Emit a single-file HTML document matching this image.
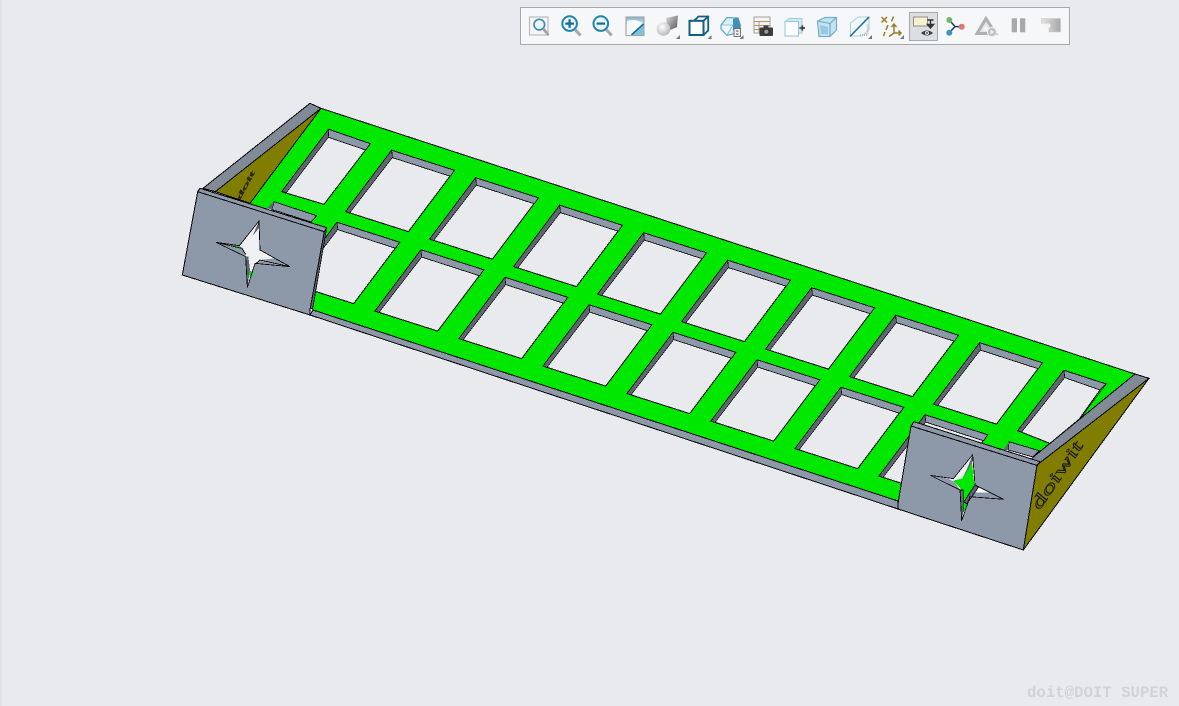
<!DOCTYPE html>
<html>
<head>
<meta charset="utf-8">
<style>
html,body{margin:0;padding:0;width:1179px;height:706px;overflow:hidden;background:#e8eaee}
svg{position:absolute;left:0;top:0}
#strip{position:absolute;left:0;top:0;width:2px;height:706px;background:#dfe3e3}
#bar{position:absolute;left:520px;top:7px;width:548px;height:36px;border:1px solid #a8a8a8;background:#f6f7f9}
#sel{position:absolute;left:909px;top:12px;width:27px;height:27px;border:1px solid #a8a8a8;background:#dcdfe2}
#wm{position:absolute;left:1027px;top:684px;font:bold 15.7px "Liberation Mono",monospace;color:#d2d3d5;white-space:pre;line-height:18px}
</style>
</head>
<body>
<div id="strip"></div>
<svg width="1179" height="706" viewBox="0 0 1179 706" shape-rendering="crispEdges">
<defs>
<g id="w">
<polygon points="0,0 62.7,20 16.7,81.3 -46,61.3" fill="#e8eaee" stroke="#000" stroke-width="1"/>
<polygon points="0,0 62.7,20 58.7,26 .7,7.3" fill="#8d99a8" stroke="#000" stroke-width=".8"/>
<polygon points="0,0 .7,7.3 -42,62.6 -46,61.3" fill="#5e6672" stroke="#000" stroke-width=".6"/>
</g>
</defs>

<polygon points="203,188.3 310,103.3 321,108.3 215.3,191.7" fill="#808b97" stroke="#000" stroke-width="1"/>
<polygon points="321,108.3 215.3,191.7 250,203.3" fill="#807d00" stroke="#000" stroke-width="1"/>
<polygon points="1135,374 1149,378.3 1037,465 1031.7,458.3" fill="#808b97" stroke="#000" stroke-width="1"/>

<polygon points="313,310 898,501 898,509 310,315" fill="#8d99a8" stroke="#000" stroke-width="1"/>
<polygon points="321,108.3 1135,374 1032,458 1000,535 898,501 313,310 250,203.3" fill="#00e800" stroke="#000" stroke-width="1"/>

<polygon points="328.7,129.3 370.3,143.7 324,204.3 281.7,191.7" fill="#e8eaee" stroke="#000"/>
<polygon points="328.7,129.3 370.3,143.7 365.7,150 328.3,137.3" fill="#8d99a8" stroke="#000" stroke-width=".8"/>
<polygon points="328.7,129.3 328.3,137.3 286.7,192.3 281.7,191.7" fill="#5e6672" stroke="#000" stroke-width=".6"/>

<use href="#w" x="391.7" y="150.3"/>
<use href="#w" x="475.7" y="177.8"/>
<use href="#w" x="559.7" y="205.3"/>
<use href="#w" x="643.7" y="232.8"/>
<use href="#w" x="727.7" y="260.3"/>
<use href="#w" x="811.7" y="287.8"/>
<use href="#w" x="895.7" y="315.3"/>
<use href="#w" x="979.7" y="342.8"/>

<use href="#w" x="337" y="222.3"/>
<use href="#w" x="421" y="249.8"/>
<use href="#w" x="505" y="277.3"/>
<use href="#w" x="589" y="304.8"/>
<use href="#w" x="673" y="332.3"/>
<use href="#w" x="757" y="359.8"/>
<use href="#w" x="841" y="387.3"/>
<use href="#w" x="925" y="414.8"/>

<polygon points="1064,370.3 1106,384 1080,418.5 1050,443.4 1017.7,430.7" fill="#e8eaee" stroke="#000"/>
<polygon points="1064,370.3 1106,384 1100,390 1064.7,377.6" fill="#8d99a8" stroke="#000" stroke-width=".8"/>
<polygon points="1064,370.3 1064.7,377.6 1021.7,432 1017.7,430.7" fill="#5e6672" stroke="#000" stroke-width=".6"/>
<polygon points="1100,390 1106,384 1080,418.5" fill="#00e800"/>
<line x1="1100" y1="390" x2="1080" y2="418" stroke="#000"/>

<polygon points="274,201.7 316.7,215.7 311,222 300,240 262,215" fill="#e8eaee"/>
<polygon points="274,201.7 316.7,215.7 311,222 272,209.5" fill="#8d99a8" stroke="#000" stroke-width=".8"/>
<polygon points="274,201.7 272,209.5 267,208" fill="#5e6672"/>

<polygon points="1009,441.7 1039.3,450.7 1031.7,458.3 1020,470 1005,450" fill="#e8eaee"/>
<polygon points="1009,441.7 1039.3,450.7 1033,457 1008.3,450" fill="#8d99a8" stroke="#000" stroke-width=".8"/>
<polygon points="1009,441.7 1008.3,450 1003.5,450" fill="#5e6672"/>

<polygon points="326.3,230 322.3,232.3 310,309 312.7,308.3" fill="#5e6672" stroke="#000" stroke-width=".8"/>
<polygon points="200,188.3 326.7,227.7 324.3,231.7 310,309.5 310,315 182.3,275 197.7,191.7" fill="#8d99a8" stroke="#000"/>
<line x1="197.7" y1="191.7" x2="324.3" y2="231.7" stroke="#000"/>

<polygon points="1149,378.3 1037,465 1023.3,550" fill="#807d00" stroke="#000"/>
<polygon points="914,421.7 1040,461.7 1037,465 1023.3,550 898,509 898.3,501.7 911,426" fill="#8d99a8" stroke="#000"/>
<line x1="911" y1="426" x2="1038" y2="465.7" stroke="#000"/>

<g transform="translate(210,215) scale(.33333)">
<polygon points="147,18 150,105 240,155 135,145 112,218 107,125 18,82 88,92" fill="#eef0f3"/>
<polygon points="18,82 88,92 100,100 107,125" fill="#8d99a8"/>
<polygon points="107,125 115,125 120,165 112,218" fill="#5e6672"/>
<polygon points="147,18 148,38 128,62" fill="#5e6672"/>
<polygon points="240,155 195,130 150,135 135,145" fill="#8d99a8"/>
<polygon points="118,168 130,170 125,187 118,185" fill="#00e800"/>
<polygon points="70,90 85,93 90,97 78,96" fill="#00e800"/>
<path d="M30 85 L95 100 L107 118 M240 155 L150 135 L135 148" fill="none" stroke="#000" stroke-width="2.4"/>
<polygon points="147,18 150,105 240,155 135,145 112,218 107,125 18,82 88,92" fill="none" stroke="#000" stroke-width="2.4"/>
</g>

<g transform="translate(925,450) scale(.33333)">
<polygon points="143,14 150,105 236,148 135,140 110,212 105,120 16,76 85,86" fill="#eef0f3"/>
<polygon points="16,76 65,85 88,95 105,120" fill="#8d99a8"/>
<polygon points="236,148 195,128 150,127 135,140" fill="#8d99a8"/>
<polygon points="140,30 148,105 118,155 128,160 115,190 115,125 85,92 112,85" fill="#00e800"/>
<polygon points="155,110 195,128 150,127" fill="#fff"/>
<polygon points="150,105 160,112 125,162 117,155" fill="#5e6672"/>
<polygon points="105,120 115,120 115,185 110,212" fill="#5e6672"/>
<polygon points="143,14 145,30 115,85" fill="#5e6672"/>
<path d="M150 105 L160 112 L125 162 L117 155 Z M105 120 L115 120 L115 185" fill="none" stroke="#000" stroke-width="2.4"/>
<polygon points="143,14 150,105 236,148 135,140 110,212 105,120 16,76 85,86" fill="none" stroke="#000" stroke-width="2.4"/>
</g>

<text transform="matrix(1.26,-1.86,1.15,.45,1040,510)" font-family="Liberation Serif,serif" font-style="italic" font-size="14" fill="none" stroke="#16161c" stroke-width="1" vector-effect="non-scaling-stroke" shape-rendering="auto">doiwit</text>
<text transform="matrix(.69,-1.28,.45,.1,240,200)" font-family="Liberation Serif,serif" font-style="italic" font-size="14" fill="none" stroke="#16161c" stroke-width="1" vector-effect="non-scaling-stroke" shape-rendering="auto">doit</text>
</svg>

<div id="bar"></div>
<div id="sel"></div>

<svg width="1179" height="706" viewBox="0 0 1179 706">
<defs>
<linearGradient id="g4" x1="0" y1="0" x2="0" y2="1"><stop offset="0" stop-color="#7fb2c9"/><stop offset=".5" stop-color="#e8f3f7"/><stop offset="1" stop-color="#f5fafc"/></linearGradient>
<radialGradient id="s1" cx=".4" cy=".35" r=".7"><stop offset="0" stop-color="#fff"/><stop offset="1" stop-color="#b4b4b4"/></radialGradient>
<linearGradient id="s2" x1="0" y1="0" x2="1" y2="1"><stop offset="0" stop-color="#dcdcdc"/><stop offset="1" stop-color="#505050"/></linearGradient>
<linearGradient id="g17" x1="0" y1="0" x2="1" y2="0"><stop offset="0" stop-color="#e2e2e2"/><stop offset="1" stop-color="#a8a8a8"/></linearGradient>
</defs>

<rect x="529.5" y="17" width="18.5" height="18" fill="#f6f6f6" stroke="#bdbdbd" stroke-width="1.2"/>
<circle cx="539.3" cy="24.6" r="5.3" fill="#eef6fa" stroke="#3f8eb4" stroke-width="1.7"/>
<path d="M543.5 29 L548.5 35.3" stroke="#a5a5a5" stroke-width="2.8"/>

<circle cx="569.6" cy="23.6" r="7.3" fill="#eaf4f8" stroke="#2383ab" stroke-width="2"/>
<path d="M565.3 23.6h8.6M569.6 19.3v8.6" stroke="#0f6c93" stroke-width="2.2"/>
<path d="M575 29.5 L580.5 35.5" stroke="#a8a8a8" stroke-width="3"/>

<circle cx="600.8" cy="23.6" r="7.3" fill="#eaf4f8" stroke="#2383ab" stroke-width="2"/>
<path d="M596.6 23.6h8.4" stroke="#0f6c93" stroke-width="2.2"/>
<path d="M606.2 29.5 L611.7 35.5" stroke="#a8a8a8" stroke-width="3"/>

<rect x="626" y="17" width="18" height="18.5" fill="url(#g4)" stroke="#a8a8a8" stroke-width="1.2"/>
<path d="M627 21 Q636 18 643.5 24 L643.5 35 L627 35Z" fill="#f4fafc"/>
<path d="M632 35 L643.5 24.5 L643.5 35Z" fill="#7fc1dc"/>
<path d="M631.5 34.8 L643.5 24" stroke="#146a8e" stroke-width="1.6"/>

<path d="M666 18 L678 15.5 L677 27 L668 31Z" fill="url(#s2)"/>
<circle cx="663.5" cy="29" r="6.8" fill="url(#s1)"/>
<path d="M680 35v4h-4z" fill="#777"/>

<path d="M694 20.8 L698.5 16.5 H708.2 V30.5 L703.5 35" fill="#f7f9fa" stroke="#0f5f80" stroke-width="1.8"/>
<path d="M703.5 20.8 L708.2 16.5" stroke="#0f5f80" stroke-width="1.8"/>
<rect x="689.5" y="20.8" width="14" height="14.2" fill="#fff" stroke="#0f5f80" stroke-width="2"/>
<path d="M711.5 35v4h-4z" fill="#777"/>

<path d="M721 25 L727 17.5 L738 18 L740.3 25 L740.3 32 L727 35.5 L721 29Z" fill="#d9eef7" stroke="#5fa7c8" stroke-width="1.2"/>
<path d="M733 19 L738 18 L740.3 25 L740.3 30 L733 30Z" fill="#3f8fb7"/>
<path d="M721.5 25 L733 25 L727 35" fill="#eef8fc" stroke="#77b7d3" stroke-width=".8"/>
<rect x="734" y="28.5" width="6.5" height="8" fill="#efefef" stroke="#666" stroke-width=".9"/>
<path d="M736 31h2.5M736 34h2.5" stroke="#555"/>
<path d="M743.5 35v4h-4z" fill="#777"/>

<rect x="754" y="17" width="16" height="16" fill="#f3f3f3" stroke="#a8a8a8" stroke-width="1.1"/>
<path d="M754 21.5h16M754 25.5h16M754 29.5h16M759 21.5v12" stroke="#b5916f" stroke-width=".9"/>
<rect x="759.5" y="27.5" width="13.5" height="8.5" rx="1" fill="#3d3d3d"/>
<rect x="763.5" y="25.5" width="5" height="3" fill="#3d3d3d"/>
<circle cx="766.3" cy="31.7" r="2.6" fill="#999" stroke="#222" stroke-width=".8"/>

<path d="M785 22 L789 18.5 H802 V33 L785 36Z" fill="#cfe9f5" stroke="#9cccdf" stroke-width="1"/>
<rect x="785" y="21.5" width="13.5" height="14.5" fill="#fff" stroke="#8cc5de" stroke-width="1"/>
<path d="M799.5 28h5.5M802.3 25.3v5.5" stroke="#444" stroke-width="1.8"/>

<path d="M817.5 21 L825 17.5 H836.5 V30 L830 36.5 H819Z" fill="#c5e3ef" stroke="#6fb0cc" stroke-width="1.2"/>
<path d="M817.5 21 L830 23.5 L836.5 17.5 M830 23.5 V36.5" fill="none" stroke="#6fb0cc" stroke-width="1.2"/>
<path d="M820 25 L828 27 L828 34 L821 34Z" fill="#92c9df"/>

<path d="M850.5 23 L858 17 H869 V30 L862 36 H850.5Z" fill="#f2f8fb" stroke="#a7cfe1" stroke-width="1"/>
<path d="M860 35 H867.5 V24" fill="none" stroke="#bdbdbd" stroke-width="2" stroke-dasharray="1 1"/>
<path d="M850 36.5 L869 17" stroke="#1e6f96" stroke-width="1.6"/>
<path d="M872 35v4h-4z" fill="#777"/>

<g stroke="#9a7b2a" stroke-width="1.5" fill="none">
<path d="M881.5 17 L887 22.5 M887 17 L881.5 22.5"/>
<path d="M893.5 16.5 L891.5 21.5"/>
<path d="M888 25 L886 30"/>
<path d="M885 32 L883.5 36"/>
<path d="M894 24 V33 M891.5 27 L894 24 L896.5 27 M894 33 L901 33 M898.5 30.5 L901 33 L898.5 35.5 M894 33 L889 36.5"/>
</g>
<path d="M904 35v4h-4z" fill="#777"/>

<rect x="913.5" y="17" width="14" height="9" fill="#f8efcd" stroke="#8f8f8f" stroke-width="1"/>
<path d="M927.5 20 H933.5 M930.5 20 V26 M927.5 24.5 L930.5 28 L933.5 24.5Z" fill="#333" stroke="#333" stroke-width="1.4"/>
<path d="M921 33 Q927 28 933 33 Q927 38 921 33Z" fill="#3d3d3d"/>
<circle cx="927" cy="33" r="2" fill="#dcdfe2"/>
<circle cx="927" cy="33" r=".9" fill="#333"/>

<path d="M949.3 20 L955 26.5 L961.7 26.7 M955 26.5 L949.3 32.7" fill="none" stroke="#173f5c" stroke-width="1.5"/>
<circle cx="949.3" cy="20" r="3" fill="#76b56c"/>
<circle cx="961.7" cy="26.7" r="3" fill="#dd7577"/>
<circle cx="949.3" cy="32.7" r="3" fill="#3f93c4"/>

<path d="M986 18.5 L995.5 33.5 H977 Z" fill="#e4e4e4" stroke="#b0b0b0" stroke-width="3"/>
<path d="M986 25 L989.5 31 H982.5Z" fill="#f5f5f5"/>
<circle cx="992" cy="32" r="4.6" fill="#c0c0c0" stroke="#efefef" stroke-width="1"/>
<path d="M990.5 29.8 L994.3 32 L990.5 34.2Z" fill="#f5f5f5"/>

<rect x="1011.7" y="18.3" width="5.3" height="14" fill="#a9a9a9"/>
<rect x="1020" y="18.3" width="5.3" height="14" fill="#a9a9a9"/>

<path d="M1041.5 18.5 H1060.5 V32 H1049 V28 Q1052 25.5 1049 23.5 H1041.5Z" fill="url(#g17)" stroke="#c9c9c9" stroke-width=".6"/>
<path d="M1041.5 23.5 H1049 Q1052 25.5 1049 28 L1044 28" fill="#f5f5f5"/>
</svg>

<div id="wm">doit@DOIT SUPER</div>
</body>
</html>
